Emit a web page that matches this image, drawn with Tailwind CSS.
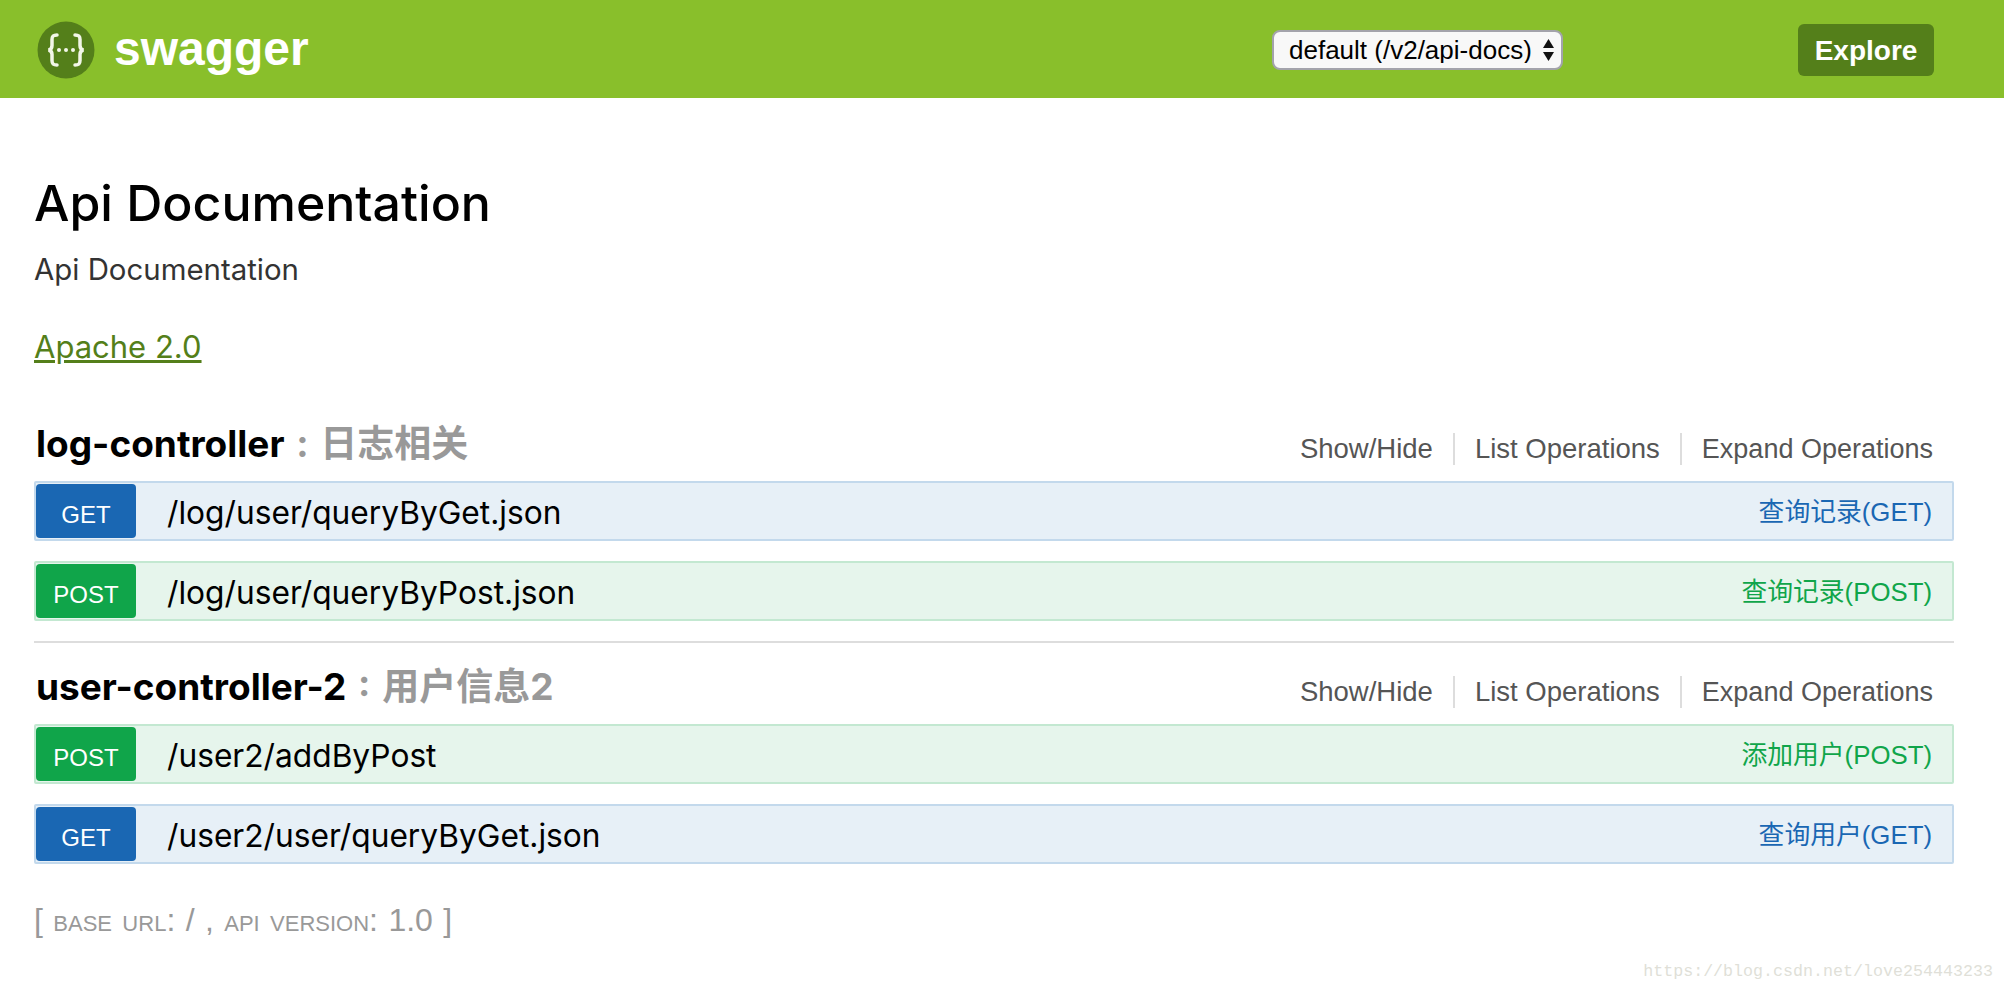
<!DOCTYPE html>
<html lang="en">
<head>
    <meta charset="UTF-8">
    <title>Swagger UI</title>
    <script src="https://cdn.jsdelivr.net/npm/@tailwindcss/browser@4"></script>
</head>
<body class="relative h-[992px] overflow-hidden bg-white font-['Inter','Noto_Sans_CJK_SC',sans-serif] text-black">
    <!-- Header -->
    <header class="flex h-[98px] items-center bg-[#89bf2b] pl-[37px] pr-[70px]">
        <div class="flex w-[1235px] items-center gap-[19px]">
            <svg class="mt-[2px] h-[58px] w-[58px]" viewBox="0 0 58 58">
                <circle cx="29" cy="29" r="28.5" fill="#547f1a"/>
                <g fill="none" stroke="#f2f6e8" stroke-width="3.500" stroke-linecap="round">
                    <path d="M20 14c-4 0-5 1.500-5 4.500v6c0 2.500-1 4-3.500 4.500 2.500 .5 3.500 2 3.500 4.500v6c0 3 1 4.500 5 4.500"/>
                    <path d="M38 14c4 0 5 1.500 5 4.500v6c0 2.500 1 4 3.500 4.500-2.500 .5-3.500 2-3.500 4.500v6c0 3-1 4.500-5 4.500"/>
                </g>
                <g fill="#f2f6e8">
                    <circle cx="22" cy="29" r="2"/>
                    <circle cx="29" cy="29" r="2"/>
                    <circle cx="36" cy="29" r="2"/>
                </g>
            </svg>
            <span class="font-['Liberation_Sans'] text-[48px] font-bold leading-none text-white">swagger</span>
        </div>
        <div class="relative mt-[2px] h-[40px] w-[291px]">
            <select class="h-full w-full appearance-none rounded-[8px] border-2 border-[#a3a3ab] bg-[#f8f8f8] pl-[15px] font-['Liberation_Sans'] text-[26px] leading-none text-black">
                <option>default (/v2/api-docs)</option>
            </select>
            <svg class="pointer-events-none absolute right-[8px] top-[8px] h-[24px] w-[13px]" viewBox="0 0 13 24" fill="#111">
                <path d="M6.500 1 12 10H1z"/>
                <path d="M6.500 23 12 14H1z"/>
            </svg>
        </div>
        <button class="ml-auto mt-[2px] flex h-[52px] w-[136px] items-center justify-center rounded-[6px] bg-[#547f1a] pt-[2px] font-['Liberation_Sans'] text-[28px] font-bold text-white">Explore</button>
    </header>

    <main class="pl-[34px] pr-[50px]">
        <h1 class="mt-[77px] text-[50px] font-medium leading-[56px]">Api Documentation</h1>
        <p class="mt-[21px] text-[29.4px] leading-[36px] text-[#333]">Api Documentation</p>
        <a href="#" class="mt-[41px] block w-fit text-[31px] leading-[36px] text-[#547f1a] underline">Apache 2.0</a>

        <!-- log-controller -->
        <section class="mt-[53px]">
            <div class="flex h-[50px] items-center justify-between pl-[2px] pr-[21px]">
                <h2 class="text-[37px] font-bold leading-none [word-spacing:3px]">log-controller <span class="text-[#999]">: 日志相关</span></h2>
                <div class="flex items-center pt-[12px] font-['Liberation_Sans'] text-[27px] leading-[32px] text-[#555]">
                    <a class="pr-[20px] text-[27.5px]">Show/Hide</a>
                    <a class="border-l-2 border-[#ddd] px-[20px] text-[27.5px]">List Operations</a>
                    <a class="border-l-2 border-[#ddd] pl-[20px]">Expand Operations</a>
                </div>
            </div>
            <div class="mt-[13px] flex flex-col gap-[20px]">
                <div class="flex h-[60px] items-center rounded-[2px] border-2 border-[#c3d9ec] bg-[#e7f0f7] pr-[20px]">
                    <span class="flex h-[54px] w-[100px] items-center justify-center rounded-[4px] bg-[#1a67b3] pt-[7px] font-['Liberation_Sans'] text-[24px] text-white">GET</span>
                    <span class="ml-[31px] pt-[4px] text-[31.7px]">/log/user/queryByGet.json</span>
                    <span class="ml-auto pt-[2px] text-[25.8px] font-['Liberation_Sans','Noto_Sans_CJK_SC'] text-[#1a67b3]">查询记录(GET)</span>
                </div>
                <div class="flex h-[60px] items-center rounded-[2px] border-2 border-[#c3e8d1] bg-[#e6f5ec] pr-[20px]">
                    <span class="flex h-[54px] w-[100px] items-center justify-center rounded-[4px] bg-[#10a54a] pt-[7px] font-['Liberation_Sans'] text-[24px] text-white">POST</span>
                    <span class="ml-[31px] pt-[4px] text-[31.7px]">/log/user/queryByPost.json</span>
                    <span class="ml-auto pt-[2px] text-[25.8px] font-['Liberation_Sans','Noto_Sans_CJK_SC'] text-[#10a54a]">查询记录(POST)</span>
                </div>
            </div>
        </section>

        <!-- user-controller-2 -->
        <section class="mt-[20px] border-t-2 border-[#ddd] pt-[18px]">
            <div class="flex h-[50px] items-center justify-between pl-[2px] pr-[21px]">
                <h2 class="text-[37px] font-bold leading-none [word-spacing:3px]">user-controller-2 <span class="text-[#999]">: 用户信息2</span></h2>
                <div class="flex items-center pt-[12px] font-['Liberation_Sans'] text-[27px] leading-[32px] text-[#555]">
                    <a class="pr-[20px] text-[27.5px]">Show/Hide</a>
                    <a class="border-l-2 border-[#ddd] px-[20px] text-[27.5px]">List Operations</a>
                    <a class="border-l-2 border-[#ddd] pl-[20px]">Expand Operations</a>
                </div>
            </div>
            <div class="mt-[13px] flex flex-col gap-[20px]">
                <div class="flex h-[60px] items-center rounded-[2px] border-2 border-[#c3e8d1] bg-[#e6f5ec] pr-[20px]">
                    <span class="flex h-[54px] w-[100px] items-center justify-center rounded-[4px] bg-[#10a54a] pt-[7px] font-['Liberation_Sans'] text-[24px] text-white">POST</span>
                    <span class="ml-[31px] pt-[4px] text-[31.7px]">/user2/addByPost</span>
                    <span class="ml-auto pt-[2px] text-[25.8px] font-['Liberation_Sans','Noto_Sans_CJK_SC'] text-[#10a54a]">添加用户(POST)</span>
                </div>
                <div class="flex h-[60px] items-center rounded-[2px] border-2 border-[#c3d9ec] bg-[#e7f0f7] pr-[20px]">
                    <span class="flex h-[54px] w-[100px] items-center justify-center rounded-[4px] bg-[#1a67b3] pt-[7px] font-['Liberation_Sans'] text-[24px] text-white">GET</span>
                    <span class="ml-[31px] pt-[4px] text-[31.7px]">/user2/user/queryByGet.json</span>
                    <span class="ml-auto pt-[2px] text-[25.8px] font-['Liberation_Sans','Noto_Sans_CJK_SC'] text-[#1a67b3]">查询用户(GET)</span>
                </div>
            </div>
        </section>

        <p class="mt-[36px] font-['Liberation_Sans'] text-[32px] leading-[40px] text-[#999] [word-spacing:1.5px] [font-variant:small-caps]">[ base url: / , api version: 1.0 ]</p>
    </main>

    <!-- watermark -->
    <div class="absolute bottom-[8px] right-[11px] font-['Liberation_Mono'] text-[16.670px] text-[#e0dfd8]">https://blog.csdn.net/love254443233</div>
</body>
</html>
